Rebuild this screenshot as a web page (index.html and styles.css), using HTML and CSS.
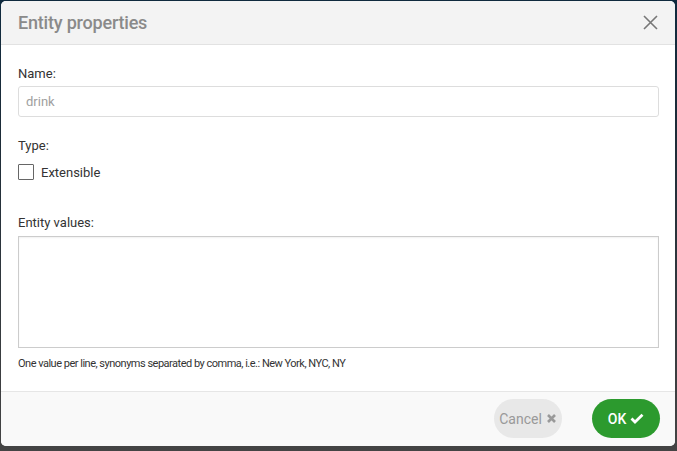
FILE: index.html
```html
<!DOCTYPE html>
<html>
<head>
<meta charset="utf-8">
<link rel="stylesheet" href="styles.css">
</head>
<body>
<div class="modal">
  <div class="modal-header">
    <h1 class="modal-title">Entity properties</h1>
    <button class="close-btn" aria-label="Close">
      <svg width="15" height="15" viewBox="0 0 15 15"><path d="M1 1 L14 14 M14 1 L1 14" stroke="#777" stroke-width="1.6" fill="none"/></svg>
    </button>
  </div>
  <div class="modal-body">
    <label class="field-label">Name:</label>
    <div class="text-input">drink</div>
    <label class="field-label type-label">Type:</label>
    <div class="checkbox-row">
      <span class="checkbox"></span>
      <span class="checkbox-text">Extensible</span>
    </div>
    <label class="field-label values-label">Entity values:</label>
    <div class="textarea"></div>
    <p class="hint">One value per line, synonyms separated by comma, i.e.: New York, NYC, NY</p>
  </div>
  <div class="modal-footer">
    <button class="btn btn-cancel">Cancel
      <svg width="11" height="11" viewBox="0 0 11 11"><path d="M2 2 L9 9 M9 2 L2 9" stroke="#999" stroke-width="2.6" fill="none"/></svg>
    </button>
    <button class="btn btn-ok">OK
      <svg width="14" height="11" viewBox="0 0 14 11"><path d="M1.5 5.5 L5 9 L12.5 1.8" stroke="#fff" stroke-width="2.8" fill="none"/></svg>
    </button>
  </div>
</div>
</body>
</html>
```
FILE: styles.css
```css
html, body {
  margin: 0;
  padding: 0;
}
body {
  width: 677px;
  height: 451px;
  overflow: hidden;
  background: linear-gradient(#0f2a3e 0%, #1d2c38 30%, #3a3d40 80%, #444 100%);
  font-family: Roboto, "Noto Sans", sans-serif;
  padding: 1px 2px 0 1px;
  box-sizing: border-box;
}
.modal {
  width: 674px;
  height: 445px;
  background: #fff;
  border-radius: 5px;
  overflow: hidden;
  display: flex;
  flex-direction: column;
}
.modal-header {
  height: 43px;
  background: #f3f3f3;
  border-bottom: 1px solid #e2e2e2;
  display: flex;
  align-items: center;
  justify-content: space-between;
  padding: 0 17px 0 17px;
  flex-shrink: 0;
}
.modal-title {
  margin: 0;
  font-size: 18px;
  font-weight: 500;
  color: #8a8a8a;
  letter-spacing: -0.2px;
}
.close-btn {
  border: 0;
  background: none;
  padding: 0;
  width: 15px;
  height: 15px;
  display: flex;
}
.modal-body {
  flex: 1;
  padding: 20px 16px 0 17px;
  display: flex;
  flex-direction: column;
}
.field-label {
  font-size: 13px;
  color: #333;
  line-height: 18px;
}
.text-input {
  margin-top: 3px;
  height: 29px;
  border: 1px solid #ddd;
  border-radius: 3px;
  padding: 0 7px;
  font-size: 13px;
  color: #a0a0a0;
  line-height: 29px;
}
.type-label {
  margin-top: 20px;
}
.checkbox-row {
  margin-top: 9px;
  display: flex;
  align-items: center;
  gap: 7px;
}
.checkbox {
  width: 14px;
  height: 14px;
  border: 1px solid #666;
  border-radius: 1px;
}
.checkbox-text {
  font-size: 13px;
  color: #333;
}
.values-label {
  margin-top: 34px;
}
.textarea {
  margin-top: 4px;
  height: 110px;
  border: 1px solid #ccc;
  box-shadow: inset 0 1px 2px rgba(0,0,0,0.06);
}
.hint {
  margin: 8px 0 0;
  font-size: 11px;
  color: #333;
  line-height: 16px;
  letter-spacing: -0.5px;
}
.modal-footer {
  height: 55px;
  flex-shrink: 0;
  background: #f9f9f9;
  border-top: 1px solid #e6e6e6;
  display: flex;
  align-items: flex-start;
  justify-content: flex-end;
  gap: 30px;
  padding: 7px 15px 0 0;
  box-sizing: border-box;
}
.btn {
  height: 39px;
  width: 68px;
  border: 0;
  border-radius: 20px;
  font-family: Roboto, "Noto Sans", sans-serif;
  font-size: 14px;
  display: flex;
  align-items: center;
  justify-content: center;
  gap: 4px;
  padding: 0;
}
.btn-cancel {
  background: #e8e8e8;
  color: #999;
}
.btn-ok {
  background: #2c9a2e;
  color: #fff;
  font-weight: 500;
}
```
